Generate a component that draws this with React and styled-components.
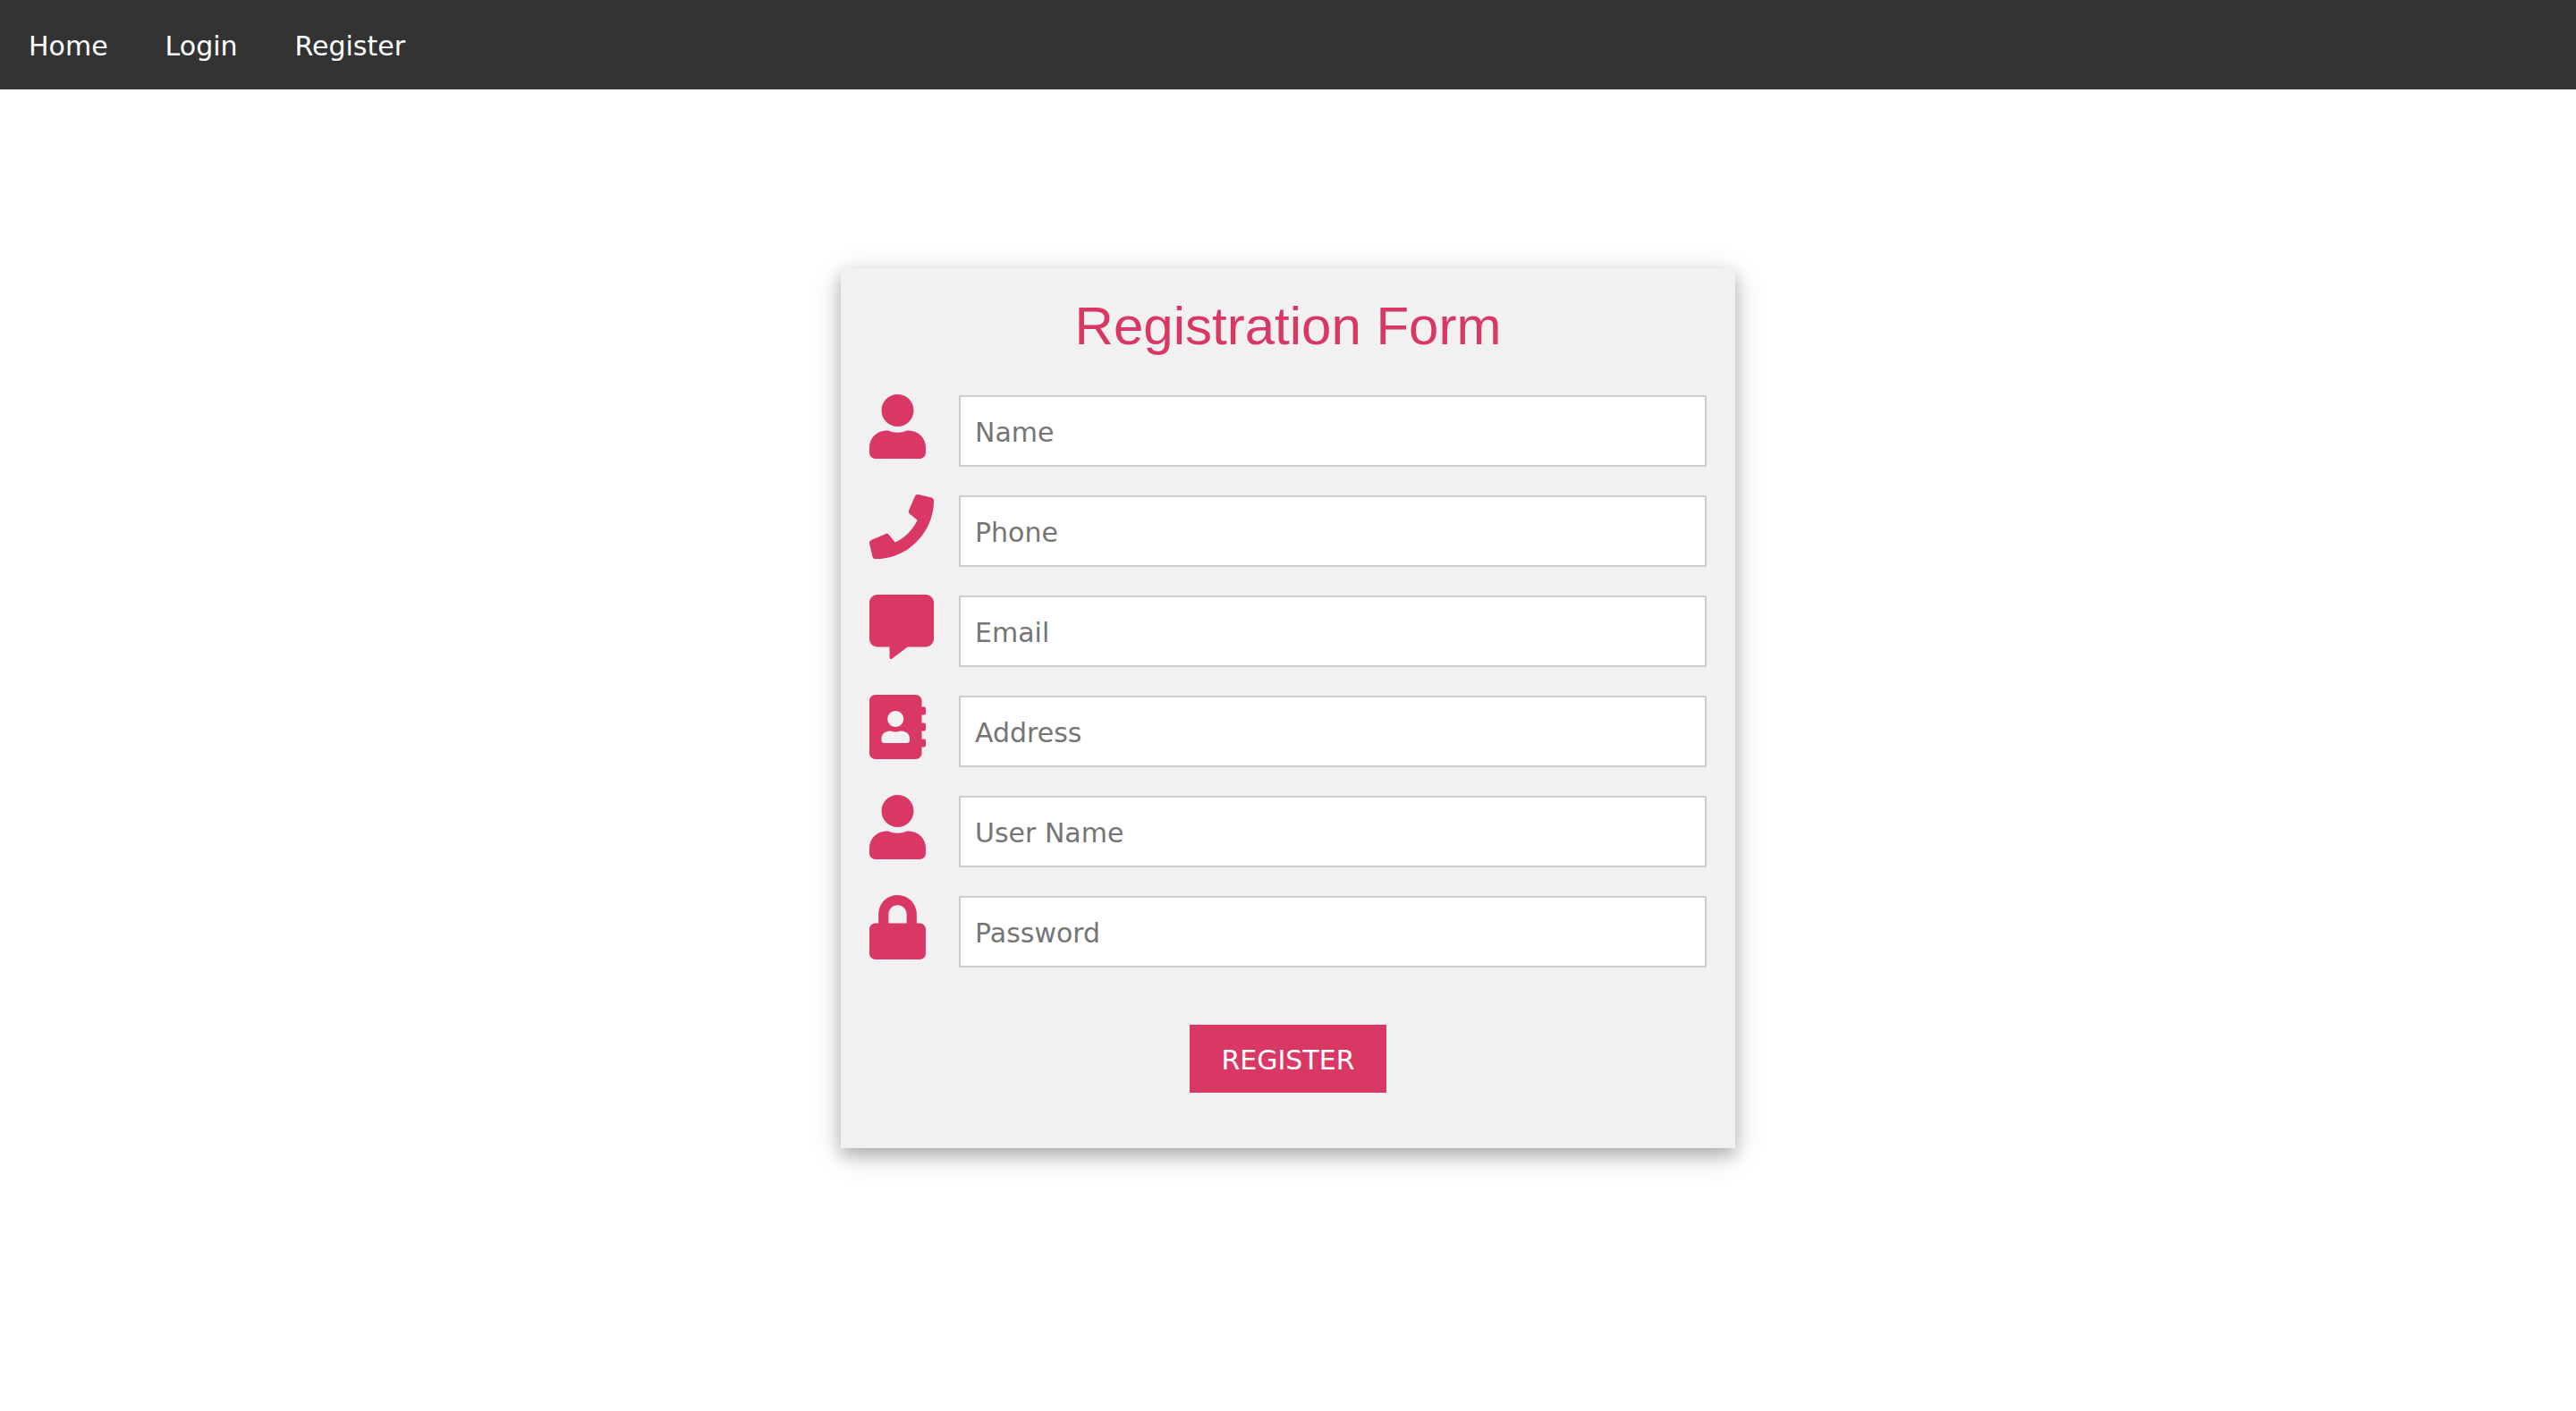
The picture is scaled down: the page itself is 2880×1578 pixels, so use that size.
import React from "react";
import styled, { createGlobalStyle } from "styled-components";
import { FaUser, FaPhone, FaCommentAlt, FaAddressBook, FaLock } from "react-icons/fa";

const accent = "#d93865";
const bodyFont = 'Verdana, "DejaVu Sans", sans-serif';

const GlobalStyle = createGlobalStyle`
  *, *::before, *::after { box-sizing: border-box; }
  body {
    margin: 0;
    background: #fff;
    color: #000;
    font-family: ${bodyFont};
    font-size: 30px;
    line-height: 1.5;
  }
`;

const Nav = styled.nav`
  display: flex;
  background: #333;
`;

const NavLink = styled.a`
  padding: 32px 32px 28px;
  color: #fff;
  line-height: 40px;
  text-decoration: none;
`;

const Main = styled.main`
  padding: 200px 32px;
`;

const Card = styled.form`
  display: flex;
  flex-direction: column;
  width: 100%;
  max-width: 1000px;
  margin: 0 auto;
  padding: 20px 32px 62px;
  background: #f1f1f1;
  box-shadow: 0 8px 16px rgba(0, 0, 0, 0.2), 0 8px 32px rgba(0, 0, 0, 0.19);
`;

const Title = styled.h2`
  margin: 0;
  color: ${accent};
  font-family: "Liberation Sans", Arial, sans-serif;
  font-size: 60px;
  font-weight: 400;
  line-height: 90px;
  text-align: center;
`;

const Fields = styled.div`
  display: flex;
  flex-direction: column;
  gap: 32px;
  margin: 32px 0 64px;
`;

const Row = styled.div`
  display: flex;
`;

const IconLabel = styled.label`
  display: flex;
  flex: 0 0 100px;
  align-items: center;
  height: 70px;
  color: ${accent};

  svg {
    width: 72px;
    height: 72px;
  }
`;

const Field = styled.input`
  flex: 1;
  min-width: 0;
  height: 80px;
  padding: 17px 16px 15px;
  border: 2px solid #ccc;
  border-radius: 0;
  background: #fff;
  color: #000;
  font: inherit;
  line-height: 36px;

  &::placeholder {
    color: #757575;
    opacity: 1;
  }
`;

const Submit = styled.button`
  align-self: center;
  min-width: 220px;
  padding: 20px 32px 16px;
  border: 0;
  background: ${accent};
  color: #fff;
  font: inherit;
  line-height: 40px;
  cursor: pointer;
`;

const links = ["Home", "Login", "Register"];

const fields = [
  { id: "name", label: "Name", type: "text", Icon: FaUser },
  { id: "phone", label: "Phone", type: "tel", Icon: FaPhone },
  { id: "email", label: "Email", type: "email", Icon: FaCommentAlt },
  { id: "address", label: "Address", type: "text", Icon: FaAddressBook },
  { id: "username", label: "User Name", type: "text", Icon: FaUser },
  { id: "password", label: "Password", type: "password", Icon: FaLock },
];

export default function App() {
  return (
    <>
      <GlobalStyle />
      <Nav>
        {links.map((text) => (
          <NavLink key={text} href={`#${text.toLowerCase()}`}>
            {text}
          </NavLink>
        ))}
      </Nav>
      <Main>
        <Card onSubmit={(event) => event.preventDefault()}>
          <Title>Registration Form</Title>
          <Fields>
            {fields.map(({ id, label, type, Icon }) => (
              <Row key={id}>
                <IconLabel htmlFor={id} aria-label={label}>
                  <Icon aria-hidden="true" preserveAspectRatio="xMinYMid meet" />
                </IconLabel>
                <Field id={id} name={id} type={type} placeholder={label} />
              </Row>
            ))}
          </Fields>
          <Submit type="submit">REGISTER</Submit>
        </Card>
      </Main>
    </>
  );
}
